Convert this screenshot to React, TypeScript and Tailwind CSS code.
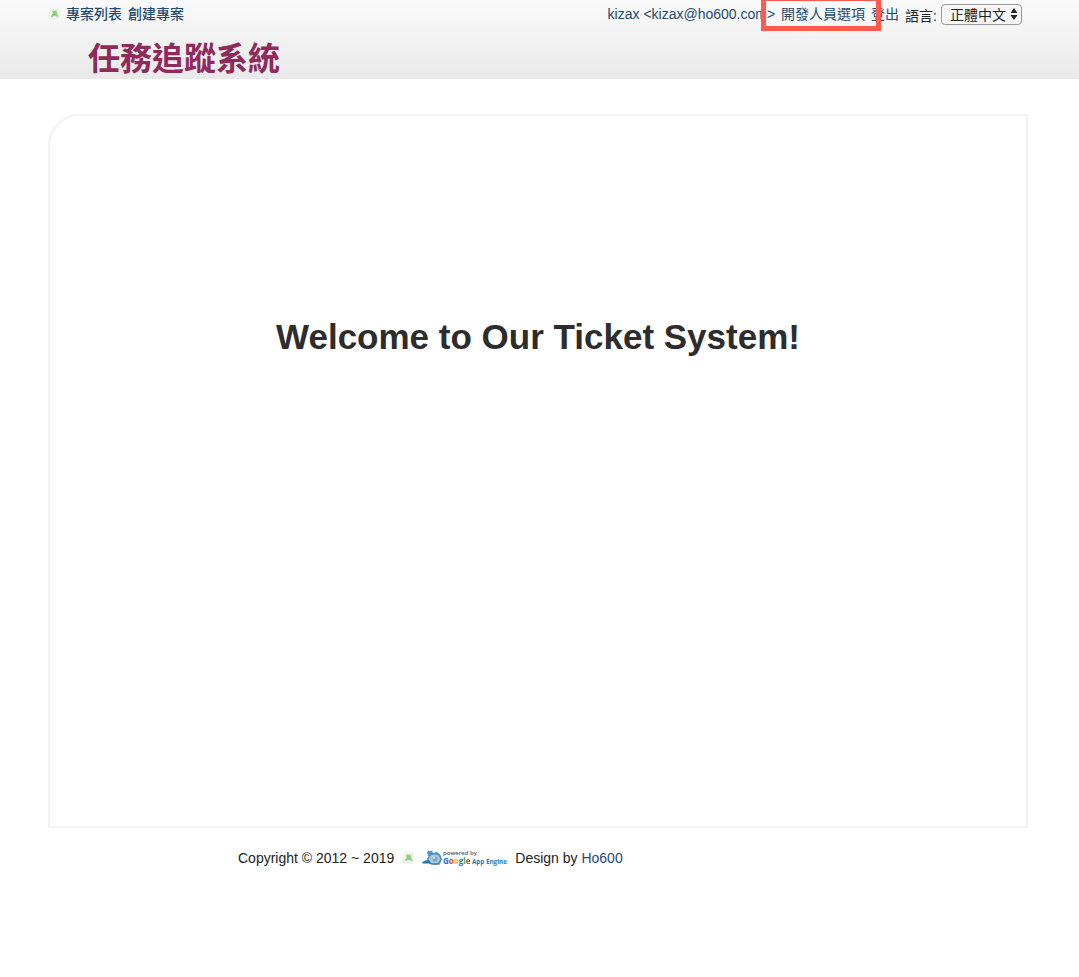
import React from "react";

function LeafIcon() {
  return (
    <svg viewBox="0 0 12 12" className="size-3 shrink-0" aria-hidden="true">
      <rect width="12" height="12" fill="#fafdf9" />
      <path d="M1.500 3.500 4 1.500l3 .6L10.500 1.500 10.700 4l-.5 3 .5 3.200L8 10.700l-2.500-.4L2 10.700 1.200 9l.6-2.500z" fill="none" stroke="#cfe6c9" strokeWidth=".7" />
      <path d="M4 2.700h4.600L9.300 6l1.400 3.500-3.200-1.600-1.800.3L2.300 9.600 4.600 5.500z" fill="#93cc83" />
    </svg>
  );
}

function AppEngineLogo() {
  return (
    <svg viewBox="0 0 86 18" className="h-[18px] w-[86px] shrink-0" role="img" aria-label="powered by Google App Engine">
      <path d="M5 10 6.500 7 5 4l1-2.500 2 1L10 1.500l1 2.500 4-1 3.500 3 1.500 4-1.500 4-4 2-7-1z" fill="#4c92c7" />
      <path d="M0 13 5 11l5 2-2 1.500H1z" fill="#2277b4" />
      <ellipse cx="12.500" cy="10" rx="5.500" ry="4.500" fill="#a9cbe2" />
      <circle cx="13" cy="10" r="2.600" fill="#7fa5bd" />
      <circle cx="12" cy="9" r="1" fill="#e9f3fa" />
      <path d="M9 15h9" stroke="#40749b" />
      <g fontFamily="Open Sans, sans-serif">
        <text x="21" y="6" fontSize="6" fontWeight="600" fill="#555">powered by</text>
        <text x="21" y="15" fontSize="8" fontWeight="700">
          <tspan fill="#2475c7">G</tspan><tspan fill="#e04437">o</tspan><tspan fill="#edb832">o</tspan><tspan fill="#2475c7">g</tspan><tspan fill="#45a754">l</tspan><tspan fill="#e04437">e</tspan>
        </text>
        <text x="50" y="15" fontSize="6.300" fontWeight="700" fill="#1e7dbb">App Engine</text>
      </g>
    </svg>
  );
}

export default function App() {
  return (
    <div className="min-h-screen bg-white font-['Liberation_Sans','Noto_Sans_CJK_TC',sans-serif] text-sm text-[#222]">
      <header className="overflow-hidden bg-linear-to-b from-[#fafafa] to-[#e9e9e9] pb-px">
        <div className="flex h-10 items-start justify-between pr-[57px] pl-12">
          <nav className="flex h-7 items-center gap-1.5 text-[#264b6e]">
            <LeafIcon />
            <a href="#projects" className="font-medium">專案列表</a>
            <a href="#create" className="font-medium">創建專案</a>
          </nav>
          <div className="flex h-7 items-center gap-1.5 text-[#264b6e]">
            <a href="#profile">kizax &lt;kizax@ho600.com&gt;</a>
            <a href="#developer" className="relative">
              開發人員選項
              <span className="absolute -top-2 -right-4 -bottom-[7px] -left-5 border-5 border-[#ff5a4d]" />
            </a>
            <a href="#logout">登出</a>
            <div className="flex items-center gap-1 text-[#222]">
              <label htmlFor="language" className="pt-1">語言:</label>
              <span className="relative flex">
                <select id="language" className="h-[21px] w-[81px] appearance-none rounded border border-[#999] bg-[#f6f6f6] pt-0.5 pl-2 leading-[17px]">
                  <option>正體中文</option>
                  <option>English</option>
                </select>
                <svg viewBox="0 0 8 12" className="pointer-events-none absolute top-1 right-1 h-3 w-2" fill="#222" aria-hidden="true">
                  <path d="M4 0 7.500 5h-7zM4 12 .5 7h7z" />
                </svg>
              </span>
            </div>
          </div>
        </div>
        <h1 className="pl-[88px] text-[32px] leading-[38px] font-bold text-[#8f2a5b]">任務追蹤系統</h1>
      </header>
      <main className="mt-[35px] mr-[51px] ml-12 rounded-tl-[32px] border-2 border-[#f2f2f2] px-4 pt-[197px] pb-[465px]">
        <h2 className="text-center text-[35px] leading-12 font-bold text-[#2d2d2d]">Welcome to Our Ticket System!</h2>
      </main>
      <footer className="mt-5 flex items-center pl-[238px] leading-5">
        <span>Copyright © 2012 ~ 2019</span>
        <a href="#home" aria-label="Home" className="ml-2"><LeafIcon /></a>
        <a href="#appengine" className="ml-2"><AppEngineLogo /></a>
        <span className="ml-[7px]">Design by <a href="#ho600" className="text-[#264b6e]">Ho600</a></span>
      </footer>
    </div>
  );
}
